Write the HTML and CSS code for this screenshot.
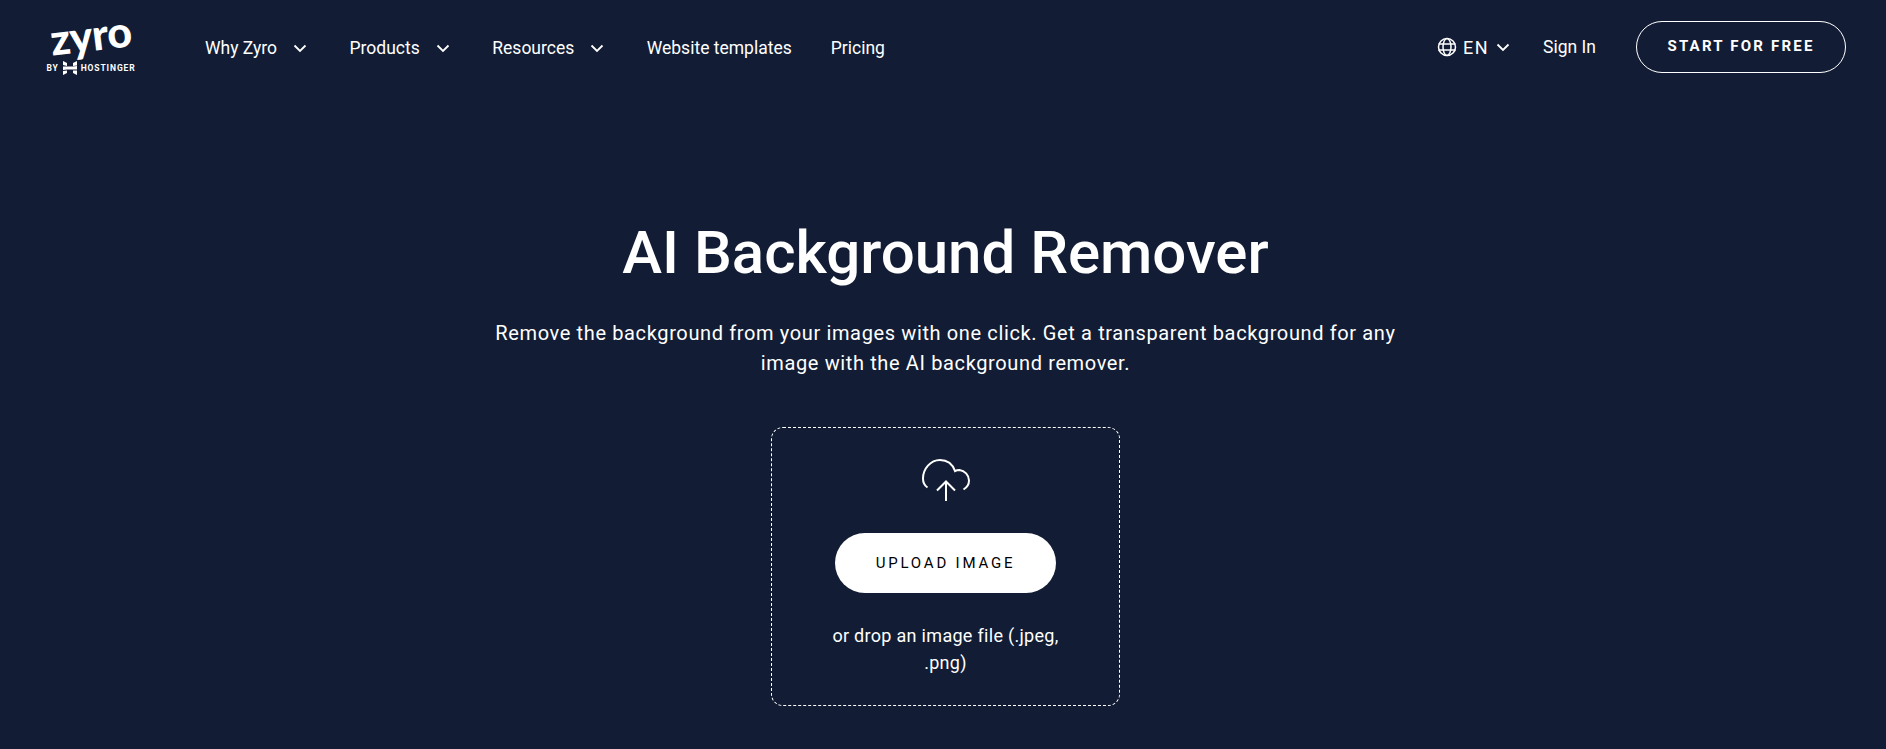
FILE: index.html
```html
<!DOCTYPE html>
<html lang="en">
  <head>
    <meta charset="utf-8" />
    <title>AI Background Remover</title>
    <link rel="stylesheet" href="styles.css">
  </head>
  <body>
    <header class="site-header">
      <a class="logo" href="#">
        <span class="logo-word">zyro</span>
        <span class="logo-by">
          <span>BY</span>
          <svg class="logo-mark" viewBox="0 0 14 14" width="14" height="14" fill="#fff">
            <path d="M0 0l4 2v3l-4-1zM14 0v4.500l-4 .5V2zM0 5.500h10l4-.5v3.500H4l-4 .5zM0 10l4-.5V12l-4 2zM10 9.500h4V14l-4-2z" />
          </svg>
          <span>HOSTINGER</span>
        </span>
      </a>
      <nav class="main-nav">
        <a href="#" class="nav-link has-menu">Why Zyro
          <svg class="chevron" viewBox="0 0 14 9" width="14" height="9"><path d="M1.500 1.500l5.500 5.500 5.500-5.500" /></svg>
        </a>
        <a href="#" class="nav-link has-menu">Products
          <svg class="chevron" viewBox="0 0 14 9" width="14" height="9"><path d="M1.500 1.500l5.500 5.500 5.500-5.500" /></svg>
        </a>
        <a href="#" class="nav-link has-menu">Resources
          <svg class="chevron" viewBox="0 0 14 9" width="14" height="9"><path d="M1.500 1.500l5.500 5.500 5.500-5.500" /></svg>
        </a>
        <a href="#" class="nav-link">Website templates</a>
        <a href="#" class="nav-link">Pricing</a>
      </nav>
      <div class="header-right">
        <a href="#" class="lang">
          <svg class="globe" viewBox="0 0 20 20" width="20" height="20">
            <circle cx="10" cy="10" r="8.500" />
            <ellipse cx="10" cy="10" rx="4" ry="8.500" />
            <path d="M1.500 7h17M1.500 13h17" />
          </svg>
          <span class="lang-code">EN</span>
          <svg class="chevron" viewBox="0 0 14 9" width="14" height="9"><path d="M1.500 1.500l5.500 5.500 5.500-5.500" /></svg>
        </a>
        <a href="#" class="nav-link sign-in">Sign In</a>
        <a href="#" class="start-btn">START FOR FREE</a>
      </div>
    </header>

    <main class="hero">
      <h1>AI Background Remover</h1>
      <p class="lead">Remove the background from your images with one click. Get a transparent background for any image with the AI background remover.</p>
      <div class="drop-box">
        <svg class="upload-icon" viewBox="0 0 48 44" width="48" height="44">
          <path d="M5.500 29.500C2.500 27.500 1 24 1 20.500 1 11 8.500 2 18 2c7 0 12.500 4 15 11 1.500-.8 3-1 4.500-1C42.500 12.500 47 17 47 22.500c0 4-2 7-5.500 9" />
          <path d="M24 43V24M15 32.500L24 23.500 33 32.500" />
        </svg>
        <button class="upload-btn">UPLOAD IMAGE</button>
        <p class="drop-note">or drop an image file (.jpeg, .png)</p>
      </div>
    </main>
  </body>
</html>
```

FILE: styles.css
```css
body {
  margin: 0;
  height: 749px;
  overflow: hidden;
  background-color: #121d35;
  color: #fff;
  font-family: 'Roboto', sans-serif;
}
a {
  color: #fff;
  text-decoration: none;
}
.site-header {
  display: flex;
  align-items: center;
  height: 94px;
  padding: 0 40px 0 46px;
}
.logo {
  display: flex;
  flex-direction: column;
  align-items: center;
  width: 90px;
  padding-bottom: 2px;
}
.logo-word {
  font-family: 'Lato', sans-serif;
  font-weight: 900;
  font-size: 43px;
  line-height: 36px;
  letter-spacing: -0.500px;
  transform: rotate(-7deg);
}
.logo-by {
  display: flex;
  align-items: center;
  gap: 4px;
  margin-top: 8px;
  font-size: 8.500px;
  font-weight: 700;
  letter-spacing: 0.900px;
}
.main-nav {
  display: flex;
  align-items: center;
  gap: 39px;
  margin-left: 69px;
  padding-top: 2px;
}
.nav-link {
  display: flex;
  align-items: center;
  font-size: 17.500px;
}
.chevron {
  fill: none;
  stroke: #fff;
  stroke-width: 1.800;
  margin-left: 16px;
}
.has-menu .chevron {
  margin-right: 3.500px;
}
.header-right {
  display: flex;
  align-items: center;
  margin-left: auto;
}
.lang {
  display: flex;
  align-items: center;
  font-size: 18px;
}
.globe {
  fill: none;
  stroke: #fff;
  stroke-width: 1.500;
}
.lang-code {
  margin-left: 6px;
  letter-spacing: 1.500px;
}
.lang .chevron {
  margin-left: 7px;
}
.sign-in {
  margin-left: 33px;
}
.start-btn {
  margin-left: 40px;
  width: 208px;
  height: 48px;
  padding-bottom: 2px;
  display: flex;
  align-items: center;
  justify-content: center;
  border: 1px solid #fff;
  border-radius: 26px;
  font-size: 15px;
  font-weight: 700;
  letter-spacing: 2.200px;
}
.hero {
  display: flex;
  flex-direction: column;
  align-items: center;
  padding-left: 5px;
}
h1 {
  margin: 124px 0 0;
  font-size: 60px;
  line-height: 70px;
  font-weight: 500;
}
.lead {
  margin: 30px 0 0;
  width: 920px;
  text-align: center;
  font-size: 20px;
  line-height: 30px;
  letter-spacing: 0.630px;
}
.drop-box {
  box-sizing: border-box;
  width: 349px;
  height: 279px;
  margin-top: 49px;
  padding-top: 30px;
  display: flex;
  flex-direction: column;
  align-items: center;
  border: 1px dashed #fff;
  border-radius: 12px;
}
.upload-icon {
  fill: none;
  stroke: #fff;
  stroke-width: 2;
}
.upload-btn {
  width: 221px;
  height: 60px;
  margin-top: 31px;
  border: 0;
  border-radius: 30px;
  background: #fff;
  color: #000;
  font-family: 'Roboto', sans-serif;
  font-size: 15px;
  letter-spacing: 2.800px;
}
.drop-note {
  margin: 29px 0 0;
  width: 240px;
  text-align: center;
  font-size: 18px;
  line-height: 27px;
  letter-spacing: 0.300px;
}
```
